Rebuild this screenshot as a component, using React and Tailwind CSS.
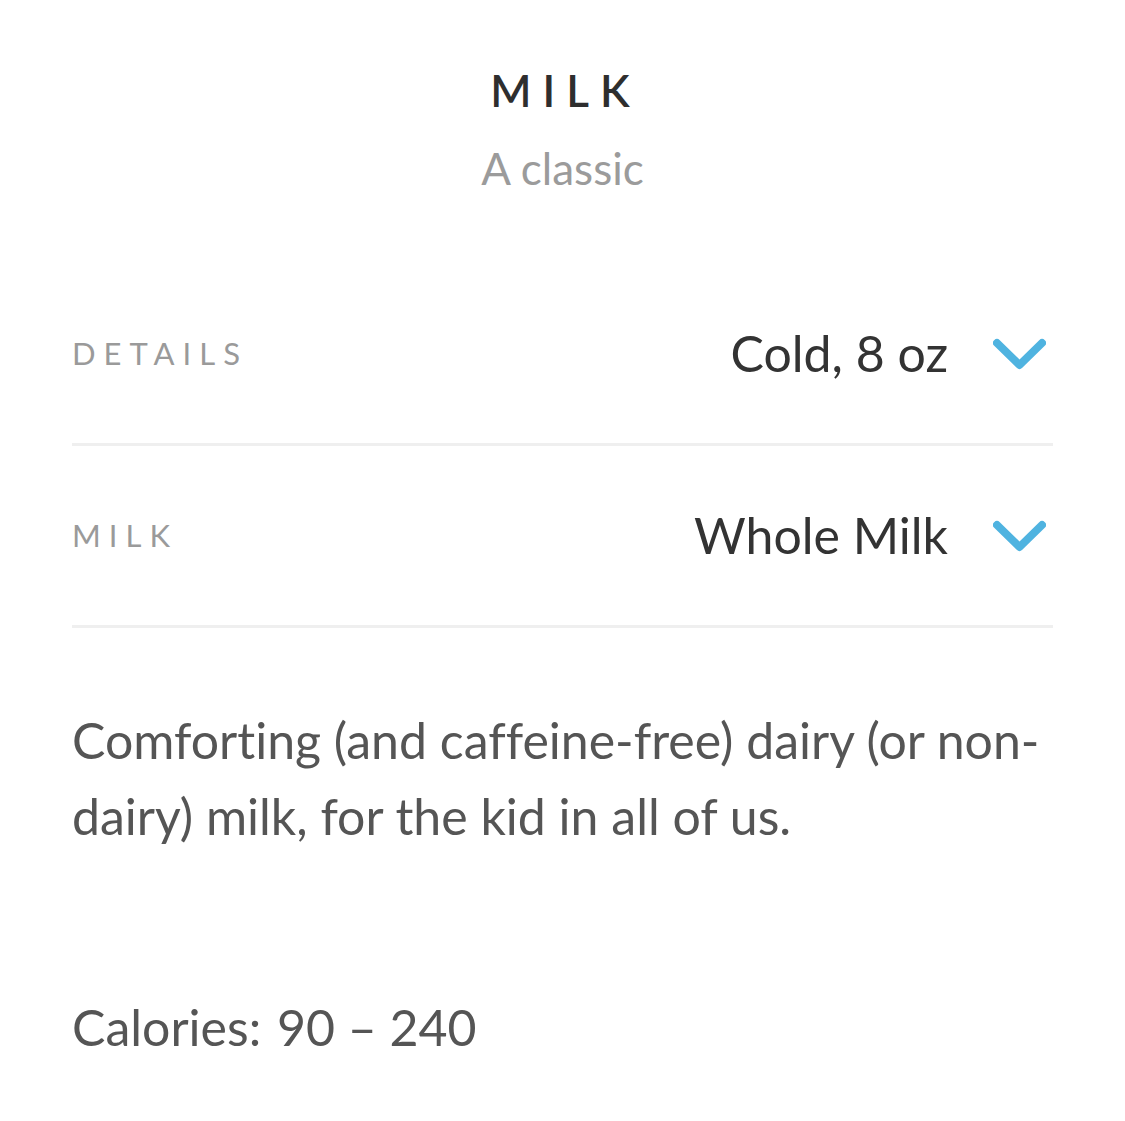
import React from 'react';

const font = { fontFamily: '"Lato", "Noto Sans", sans-serif' };

const Chevron = () => (
  <svg width="53" height="32" viewBox="0 0 53 32" className="shrink-0 mr-[7px]">
    <polyline
      points="4,5 26.5,27 49,5"
      fill="none"
      stroke="#4fb3e0"
      strokeWidth="8"
      strokeLinecap="round"
      strokeLinejoin="round"
    />
  </svg>
);

const OptionRow = ({ label, value }) => (
  <div className="flex items-center justify-between h-[182px] border-b-[3px] border-[#efefef]">
    <span className="text-[31px] tracking-[8px] text-[#9a9a9a] uppercase">{label}</span>
    <div className="flex items-center gap-[45px]">
      <span className="text-[50px] text-[#333333]">{value}</span>
      <Chevron />
    </div>
  </div>
);

const App = () => {
  return (
    <div
      className="w-[1125px] h-[1121px] bg-white px-[72px] [font-variant-ligatures:none]"
      style={font}
    >
      <div className="flex flex-col items-center pt-[62px] h-[264px]">
        <h1 className="text-[44px] font-semibold tracking-[11px] pl-[6px] text-[#2e2e2e] leading-[56px]">
          MILK
        </h1>
        <p className="text-[44px] text-[#9b9b9b] leading-[56px] mt-[22px]">A classic</p>
      </div>

      <OptionRow label="Details" value="Cold, 8 oz" />
      <OptionRow label="Milk" value="Whole Milk" />

      <p className="mt-[74px] text-[50px] leading-[76px] text-[#555555]">
        Comforting (and caffeine-free) dairy (or non-dairy) milk, for the kid in all of us.
      </p>

      <p className="mt-[135px] text-[50px] leading-[76px] text-[#555555]">
        Calories: <span className="ml-[3px]">90 – 240</span>
      </p>
    </div>
  );
};

export default App;
